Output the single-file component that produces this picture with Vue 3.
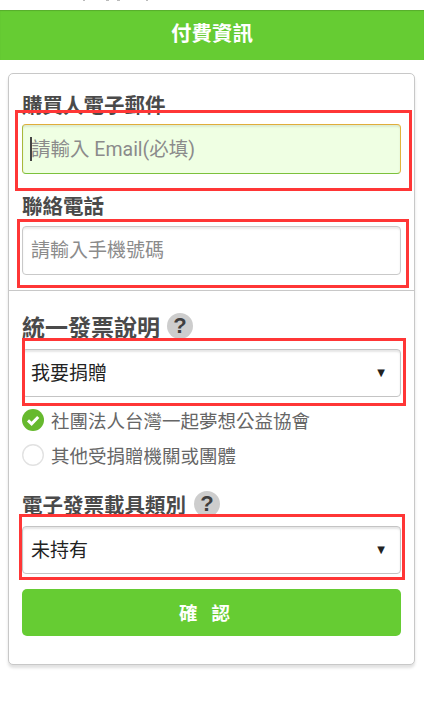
<script setup>
import { ref } from 'vue'

const email = ref('')
const phone = ref('')
const invoice = ref('donate')
const carrier = ref('none')
const charity = ref('dream')

const charities = [
  { id: 'dream', name: '社團法人台灣一起夢想公益協會' },
  { id: 'other', name: '其他受捐贈機關或團體' }
]
</script>

<template>
  <div class="page">
    <div class="top-strip"></div>
    <div class="header">付費資訊</div>

    <div class="card">
      <div class="section first">
        <div class="label">購買人電子郵件</div>
        <div class="input-wrap">
          <input v-model="email" class="text-input focused" type="text" placeholder="請輸入 Email(必填)" />
          <span class="caret"></span>
        </div>
        <div class="label phone-label">聯絡電話</div>
        <input v-model="phone" class="text-input phone" type="text" placeholder="請輸入手機號碼" />
      </div>

      <div class="section second">
        <div class="title">
          統一發票說明
          <span class="help">?</span>
        </div>
        <div class="select-wrap">
          <select v-model="invoice" class="select">
            <option value="donate">我要捐贈</option>
            <option value="personal">二聯式發票</option>
          </select>
          <span class="arrow">▼</span>
        </div>

        <div class="radios">
          <div v-for="c in charities" :key="c.id" class="radio-row" @click="charity = c.id">
            <svg v-if="charity === c.id" class="radio-icon" viewBox="0 0 22 22">
              <circle cx="11" cy="11" r="11" fill="#66b92e" />
              <path d="M6 11.4l3.6 3.4L16.2 8" fill="none" stroke="#fff" stroke-width="3" />
            </svg>
            <svg v-else class="radio-icon" viewBox="0 0 22 22">
              <circle cx="11" cy="11" r="10.3" fill="#fff" stroke="#e2e2e2" stroke-width="1.4" />
            </svg>
            <span>{{ c.name }}</span>
          </div>
        </div>

        <div class="label carrier-label">
          電子發票載具類別
          <span class="help">?</span>
        </div>
        <div class="select-wrap">
          <select v-model="carrier" class="select">
            <option value="none">未持有</option>
            <option value="phone">手機條碼</option>
          </select>
          <span class="arrow">▼</span>
        </div>

        <button class="confirm" type="button">確認</button>
      </div>
    </div>

    <!-- 紅框標註 -->
    <div class="mark mark-email"></div>
    <div class="mark mark-phone"></div>
    <div class="mark mark-invoice"></div>
    <div class="mark mark-carrier"></div>
  </div>
</template>

<style>
html,
body {
  margin: 0;
  background: #fff;
}
</style>

<style scoped>
.page {
  position: relative;
  width: 424px;
  height: 702px;
  overflow: hidden;
  background: #fff;
  font-family: Roboto, "Noto Sans CJK TC", sans-serif;
  color: #4a4a4a;
}

/* 上一段文字被裁切後留下的殘跡 */
.top-strip {
  height: 10px;
  background:
    linear-gradient(#bbb, #bbb) 83px 0 / 2px 1px no-repeat,
    linear-gradient(#bbb, #bbb) 106px 0 / 3px 1px no-repeat,
    linear-gradient(#bbb, #bbb) 117px 0 / 3px 1px no-repeat,
    linear-gradient(#bbb, #bbb) 146px 0 / 2px 1px no-repeat;
}

.header {
  height: 50px;
  line-height: 49px;
  background: #66cc33;
  box-shadow: inset 0 1px 1px rgba(0, 0, 0, 0.15);
  color: #fff;
  font-size: 20.5px;
  font-weight: 700;
  text-align: center;
}

.card {
  box-sizing: border-box;
  width: 407px;
  height: 592px;
  margin: 13px 0 0 8px;
  border: 1px solid #c8c8c8;
  border-radius: 5px;
  box-shadow: 0 3px 3px rgba(0, 0, 0, 0.12);
  background: #fff;
}

.section {
  padding: 0 13px;
}

.section.first {
  padding-top: 18px;
  padding-bottom: 15px;
  border-bottom: 1px solid #c8c8c8;
}

.label {
  display: flex;
  align-items: center;
  gap: 8px;
  height: 24px;
  font-size: 20.5px;
  font-weight: 700;
}

.phone-label {
  margin-top: 19px;
}

.input-wrap {
  position: relative;
  margin-top: 8px;
}

.text-input {
  display: block;
  box-sizing: border-box;
  width: 100%;
  height: 50px;
  padding: 0 8px;
  border: 1px solid #c9c9c9;
  border-radius: 4px;
  box-shadow: inset 0 2px 2px rgba(0, 0, 0, 0.08);
  background: #fff;
  outline: none;
  font-family: inherit;
  font-size: 19px;
}

.text-input::placeholder {
  color: #8b8b8b;
  opacity: 1;
}

.text-input.focused {
  border-color: #e0ad3a #e0b53a #7cc13c #a8b83a;
  background: #efffe3;
  font-size: 19.5px;
}

.text-input.phone {
  height: 49px;
  margin-top: 9px;
}

.caret {
  position: absolute;
  top: 13px;
  left: 8px;
  width: 1.5px;
  height: 24px;
  background: #444;
}

.title {
  display: flex;
  align-items: center;
  gap: 7px;
  height: 28px;
  margin-top: 21px;
  font-size: 23px;
  font-weight: 700;
}

.help {
  width: 26px;
  height: 26px;
  border-radius: 50%;
  background: #cdcdcd;
  color: #3f3f3f;
  font-family: "Liberation Sans", sans-serif;
  font-size: 22px;
  font-weight: 700;
  line-height: 26px;
  text-align: center;
}

.select-wrap {
  position: relative;
  margin-top: 9px;
}

.carrier-label + .select-wrap {
  margin-top: 10px;
}

.select {
  display: block;
  box-sizing: border-box;
  width: 100%;
  height: 48px;
  padding: 0 8px;
  border: 1px solid #c4c4c4;
  border-radius: 4px;
  box-shadow: inset 0 2px 2px rgba(0, 0, 0, 0.1);
  background: #fff;
  appearance: none;
  outline: none;
  color: #222;
  font-family: inherit;
  font-size: 19px;
}

.arrow {
  position: absolute;
  top: 17px;
  right: 16px;
  color: #222;
  font-family: "DejaVu Sans", sans-serif;
  font-size: 10px;
  line-height: 14px;
  pointer-events: none;
}

.radios {
  display: flex;
  flex-direction: column;
  gap: 13px;
  margin-top: 12px;
}

.radio-row {
  display: flex;
  align-items: center;
  gap: 7px;
  height: 22px;
  color: #666;
  font-size: 18.5px;
}

.radio-icon {
  flex-shrink: 0;
  width: 22px;
  height: 22px;
}

.carrier-label {
  margin-top: 26px;
}

.confirm {
  display: block;
  box-sizing: border-box;
  width: 100%;
  height: 47px;
  margin-top: 15px;
  padding: 0 0 2px;
  border: none;
  border-radius: 5px;
  background: #66cc33;
  color: #fff;
  font-family: inherit;
  font-size: 18.5px;
  font-weight: 700;
  letter-spacing: 14px;
}

.mark {
  position: absolute;
  box-sizing: border-box;
  border: 3px solid #ff3636;
  pointer-events: none;
}

.mark-email {
  top: 110px;
  left: 15px;
  width: 397px;
  height: 81px;
}

.mark-phone {
  top: 219px;
  left: 17px;
  width: 392px;
  height: 69px;
}

.mark-invoice {
  top: 338px;
  left: 22px;
  width: 384px;
  height: 68px;
}

.mark-carrier {
  top: 514px;
  left: 19px;
  width: 386px;
  height: 66px;
}
</style>
